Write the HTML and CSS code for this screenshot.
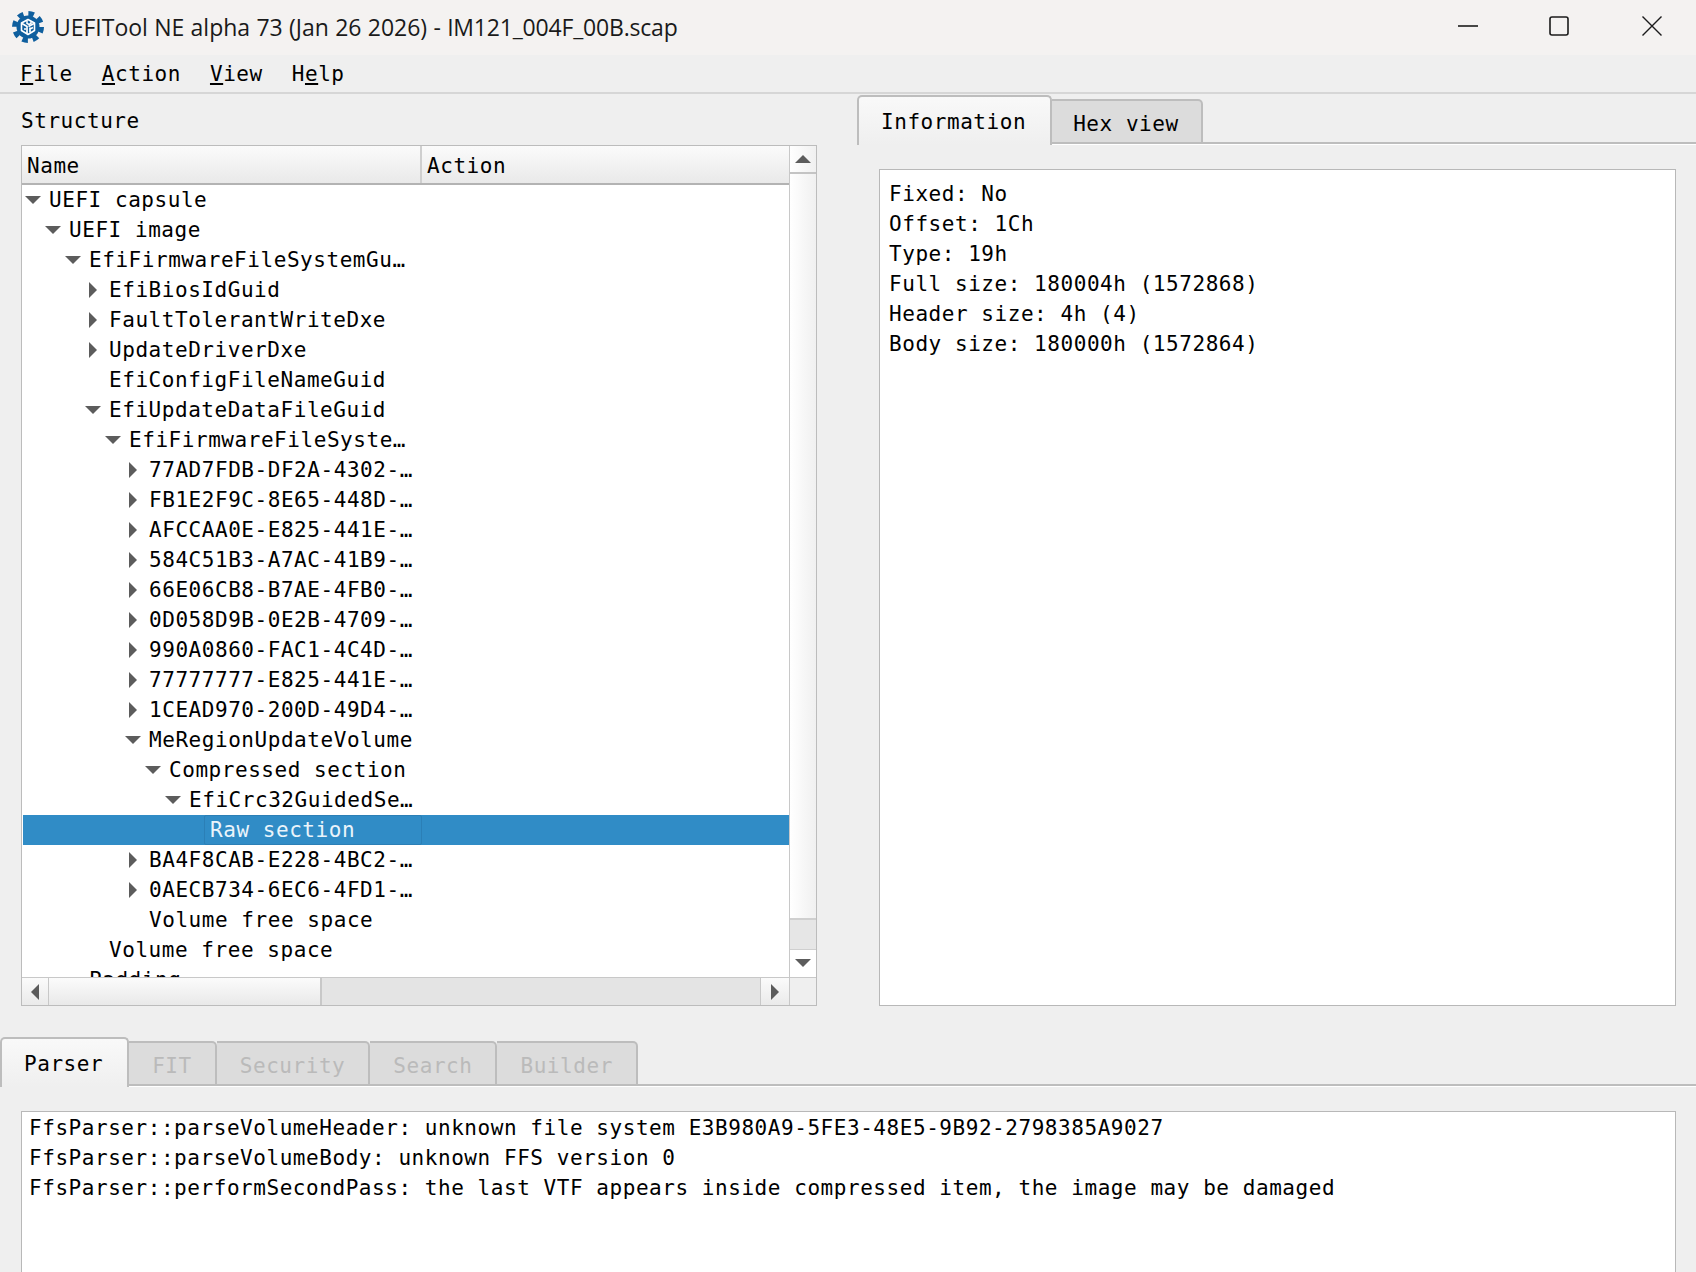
FILE: index.html
```html
<!DOCTYPE html>
<html lang="en">
<head>
<meta charset="utf-8">
<title>UEFITool NE</title>
<link rel="stylesheet" href="styles.css">
</head>
<body>
<header class="titlebar">
  <svg class="logo" width="32" height="32" viewBox="0 0 32 32">
    <circle cx="16" cy="16" r="11.5" fill="#0f5f9e"/>
    <circle cx="16" cy="16" r="13.5" fill="none" stroke="#0f5f9e" stroke-width="5" stroke-dasharray="5.6 5"/>
    <path d="M16 8.5l6.5 3.5v7.5L16 23.5l-6.5-4V12z" fill="#0f5f9e" stroke="#fff" stroke-width="1.6" stroke-linejoin="round"/>
    <path d="M10 12.5l5 3v7M22 12.5l-5.500 3M12 18h2M18 16.500v5M18 18l3-1.500" fill="none" stroke="#fff" stroke-width="1.700"/>
    <path d="M15 9.500v3l2 1 2-1V10.500" fill="none" stroke="#fff" stroke-width="1.500"/>
  </svg>
  <span class="title">UEFITool NE alpha 73 (Jan 26 2026) - <span class="fname">IM121_004F_00B.scap</span></span>
  <div class="winctl">
    <svg width="20" height="20" viewBox="0 0 20 20"><path d="M0 10h20" stroke="#1b1b1b" stroke-width="1.600"/></svg>
    <svg class="maxbtn" width="20" height="20" viewBox="0 0 20 20"><rect x="1" y="1" width="18" height="18" rx="2" fill="none" stroke="#1b1b1b" stroke-width="1.600"/></svg>
    <svg width="20" height="20" viewBox="0 0 20 20"><path d="M.5.5l19 19M19.500.5l-19 19" stroke="#1b1b1b" stroke-width="1.400"/></svg>
  </div>
</header>
<nav class="menubar">
  <span class="menuitem"><u>F</u>ile</span>
  <span class="menuitem"><u>A</u>ction</span>
  <span class="menuitem"><u>V</u>iew</span>
  <span class="menuitem">H<u>e</u>lp</span>
  <span class="menurest"></span>
</nav>
<main class="top">
  <section class="structure">
    <div class="grouplabel">Structure</div>
    <div class="frame">
      <div class="treearea">
        <div class="header">
          <div class="hcell hname">Name</div>
          <div class="hcell haction">Action</div>
        </div>
        <div class="rows">
          <div class="row l0"><span class="slot"><i class="down"></i></span>UEFI capsule</div>
          <div class="row l1"><span class="slot"><i class="down"></i></span>UEFI image</div>
          <div class="row l2"><span class="slot"><i class="down"></i></span>EfiFirmwareFileSystemGu…</div>
          <div class="row l3"><span class="slot"><i class="right"></i></span>EfiBiosIdGuid</div>
          <div class="row l3"><span class="slot"><i class="right"></i></span>FaultTolerantWriteDxe</div>
          <div class="row l3"><span class="slot"><i class="right"></i></span>UpdateDriverDxe</div>
          <div class="row l3"><span class="slot"></span>EfiConfigFileNameGuid</div>
          <div class="row l3"><span class="slot"><i class="down"></i></span>EfiUpdateDataFileGuid</div>
          <div class="row l4"><span class="slot"><i class="down"></i></span>EfiFirmwareFileSyste…</div>
          <div class="row l5"><span class="slot"><i class="right"></i></span>77AD7FDB-DF2A-4302-…</div>
          <div class="row l5"><span class="slot"><i class="right"></i></span>FB1E2F9C-8E65-448D-…</div>
          <div class="row l5"><span class="slot"><i class="right"></i></span>AFCCAA0E-E825-441E-…</div>
          <div class="row l5"><span class="slot"><i class="right"></i></span>584C51B3-A7AC-41B9-…</div>
          <div class="row l5"><span class="slot"><i class="right"></i></span>66E06CB8-B7AE-4FB0-…</div>
          <div class="row l5"><span class="slot"><i class="right"></i></span>0D058D9B-0E2B-4709-…</div>
          <div class="row l5"><span class="slot"><i class="right"></i></span>990A0860-FAC1-4C4D-…</div>
          <div class="row l5"><span class="slot"><i class="right"></i></span>77777777-E825-441E-…</div>
          <div class="row l5"><span class="slot"><i class="right"></i></span>1CEAD970-200D-49D4-…</div>
          <div class="row l5"><span class="slot"><i class="down"></i></span>MeRegionUpdateVolume</div>
          <div class="row l6"><span class="slot"><i class="down"></i></span>Compressed section</div>
          <div class="row l7"><span class="slot"><i class="down"></i></span>EfiCrc32GuidedSe…</div>
          <div class="row selected"><span class="selcell">Raw section</span></div>
          <div class="row l5"><span class="slot"><i class="right"></i></span>BA4F8CAB-E228-4BC2-…</div>
          <div class="row l5"><span class="slot"><i class="right"></i></span>0AECB734-6EC6-4FD1-…</div>
          <div class="row l5"><span class="slot"></span>Volume free space</div>
          <div class="row l3"><span class="slot"></span>Volume free space</div>
          <div class="row l2"><span class="slot"></span>Padding</div>
        </div>
      </div>
      <div class="vscroll">
        <div class="vbtn vbtn-up"><i class="up"></i></div>
        <div class="vtrack"></div>
        <div class="vhandle"></div>
        <div class="vbtn vbtn-down"><i class="down"></i></div>
      </div>
      <div class="hscroll">
        <div class="hbtn"><i class="left"></i></div>
        <div class="hhandle"></div>
        <div class="htrack"></div>
        <div class="hbtn hbtn-r"><i class="right"></i></div>
      </div>
      <div class="corner"></div>
    </div>
  </section>
  <section class="details">
    <div class="tabbar">
      <div class="tab active">Information</div>
      <div class="tab">Hex view</div>
      <div class="tabfill"></div>
    </div>
    <pre class="pane infopane">Fixed: No
Offset: 1Ch
Type: 19h
Full size: 180004h (1572868)
Header size: 4h (4)
Body size: 180000h (1572864)</pre>
  </section>
</main>
<section class="bottom">
  <div class="tabbar">
    <div class="tab active">Parser</div>
    <div class="tab disabled">FIT</div>
    <div class="tab disabled">Security</div>
    <div class="tab disabled">Search</div>
    <div class="tab disabled">Builder</div>
    <div class="tabfill"></div>
  </div>
  <pre class="pane logpane">FfsParser::parseVolumeHeader: unknown file system E3B980A9-5FE3-48E5-9B92-2798385A9027
FfsParser::parseVolumeBody: unknown FFS version 0
FfsParser::performSecondPass: the last VTF appears inside compressed item, the image may be damaged</pre>
</section>
</body>
</html>
```
FILE: styles.css
```css
* { box-sizing: border-box; }
html, body { margin: 0; height: 1272px; overflow: hidden; }
body {
  display: flex;
  flex-direction: column;
  background: #efefef;
  color: #000;
  font-family: "DejaVu Sans Mono", monospace;
  font-size: 21px;
  letter-spacing: 0.55px;
}
.titlebar {
  height: 55px;
  flex: none;
  display: flex;
  align-items: center;
  padding: 0 34px 0 12px;
  background: #f4f2f1;
  font-family: "Open Sans", sans-serif;
  letter-spacing: 0;
  color: #1a1a1a;
}
.logo { flex: none; margin-right: 10px; margin-bottom: 2px; }
.title { font-size: 23px; margin-bottom: 2px; word-spacing: 0.4px; letter-spacing: -0.02px; }
.fname { letter-spacing: -0.19px; }
.winctl { margin-left: auto; display: flex; gap: 72px; margin-bottom: 3px; }
.maxbtn { margin: 0 1px 0 -1px; }

.menubar {
  height: 39px;
  flex: none;
  display: flex;
  align-items: stretch;
}
.menuitem {
  padding: 0 8px 0 21px;
  line-height: 39px;
  border-bottom: 2px solid #d6d6d6;
}
.menuitem:first-child { padding-left: 20px; }
.menurest { flex: 1; border-bottom: 2px solid #d6d6d6; }

.top { flex: none; height: 912px; display: flex; }
.structure {
  width: 796px;
  margin: 0 40px 0 21px;
  display: flex;
  flex-direction: column;
}
.grouplabel { height: 51px; line-height: 54px; }
.frame {
  flex: 1;
  display: grid;
  grid-template-columns: 1fr 27px;
  grid-template-rows: 1fr 28px;
  border: 1px solid #bcbcbc;
  min-height: 0;
}
.treearea { overflow: hidden; min-height: 0; }
.header { height: 39px; display: flex; background: linear-gradient(#fbfbfb, #e9e9e9); border-bottom: 2px solid #b3b3b3; }
.hcell { line-height: 41px; padding-left: 5px; }
.hname { width: 398px; }
.haction { flex: 1; border-left: 2px solid #cfcfcf; padding-left: 5px; }
.rows { background: #fff; height: 100%; }
.row { height: 30px; line-height: 30px; display: flex; white-space: pre; }
.slot { flex: none; width: 27px; display: flex; align-items: center; padding-left: 3px; }
.l0 { padding-left: 0; }
.l1 { padding-left: 20px; }
.l2 { padding-left: 40px; }
.l3 { padding-left: 60px; }
.l4 { padding-left: 80px; }
.l5 { padding-left: 100px; }
.l6 { padding-left: 120px; }
.l7 { padding-left: 140px; }
.selected { background: #308cc6; color: #eaf4fb; padding-left: 181px; margin-left: 1px; }
.selcell { width: 218px; padding-left: 5px; border: 1px solid #2b7fb6; line-height: 28px; border-radius: 2px; }
.down, .up, .left, .right { display: block; width: 0; height: 0; border-style: solid; border-color: transparent; }
.down { border-width: 8px 8px 0; border-top-color: #5c5c5c; }
.up { border-width: 0 8px 8px; border-bottom-color: #5c5c5c; }
.left { border-width: 8px 8px 8px 0; border-right-color: #5c5c5c; }
.right { border-width: 8px 0 8px 8px; border-left-color: #5c5c5c; margin-left: 4px; }

.vscroll {
  display: flex;
  flex-direction: column;
  border-left: 1px solid #c8c8c8;
  background: linear-gradient(90deg, #fff, #f0f0f0);
}
.vbtn { flex: none; height: 28px; display: flex; align-items: center; justify-content: center; }
.vbtn-up { border-bottom: 2px solid #c4c4c4; }
.vbtn-down { height: 27px; background: #fff; padding-bottom: 2px; }
.vtrack { flex: 1; }
.vhandle { flex: none; height: 32px; background: #e6e6e6; border-top: 2px solid #cfcfcf; border-bottom: 1px solid #cfcfcf; }
.hscroll {
  display: flex;
  border-top: 1px solid #c8c8c8;
}
.hbtn { flex: none; width: 27px; display: flex; align-items: center; justify-content: center; background: linear-gradient(#fbfbfb, #eaeaea); border-right: 1px solid #c8c8c8; }
.hbtn-r { width: 29px; border-right: 0; border-left: 1px solid #c8c8c8; padding-right: 4px; }
.hhandle { flex: none; width: 273px; background: linear-gradient(#fbfbfb, #e9e9e9); border-right: 2px solid #c8c8c8; }
.htrack { flex: 1; background: #e4e4e4; }
.corner { border-top: 1px solid #c8c8c8; border-left: 1px solid #c8c8c8; }

.details { flex: 1; display: flex; flex-direction: column; padding-top: 1px; min-width: 0; }
.tabbar { flex: none; height: 50px; display: flex; align-items: flex-end; }
.tab {
  flex: none;
  height: 45px;
  margin-bottom: 1px;
  padding: 0 22px 0 21px;
  line-height: 46px;
  background: #dcdcdc;
  border: 2px solid #bdbdbd;
  border-left: 0;
  border-radius: 0 5px 0 0;
  box-shadow: 0 1px 0 #fff;
}
.tab.active {
  height: 50px;
  margin-bottom: 0;
  padding: 0 24px 0 22px;
  line-height: 50px;
  background: linear-gradient(#f9f9f9, #efefef);
  border-bottom: 0;
  border-left: 2px solid #bdbdbd;
  border-radius: 5px 5px 0 0;
  box-shadow: none;
}
.tab.disabled { color: #bababa; padding: 0 23px; }
.tabfill {
  flex: 1;
  height: 2px;
  margin-bottom: 1px;
  background: #bdbdbd;
  box-shadow: 0 1px 0 #fff;
}
.pane {
  margin: 24px 20px 0 0;
  padding: 9px 9px;
  background: #fff;
  border: 1px solid #b8b8b8;
  font: inherit;
  letter-spacing: inherit;
  line-height: 30px;
  white-space: pre;
  overflow: hidden;
}
.infopane { flex: 1; margin-left: 22px; }
.bottom { flex: 1; display: flex; flex-direction: column; padding-top: 31px; min-height: 0; }
.logpane { flex: 1; margin-left: 21px; padding-top: 1px; padding-left: 7px; border-bottom: 0; }
```
